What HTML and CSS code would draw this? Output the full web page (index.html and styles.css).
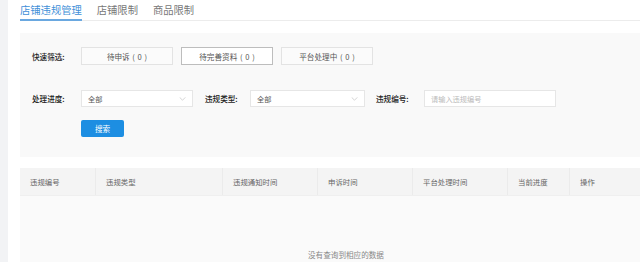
FILE: index.html
```html
<!DOCTYPE html>
<html lang="zh">
<head>
<meta charset="utf-8">
<link rel="stylesheet" href="styles.css">
</head>
<body>
<div class="page">
  <div class="tabs">
    <span class="tab active">店铺违规管理</span>
    <span class="tab">店铺限制</span>
    <span class="tab">商品限制</span>
  </div>
  <div class="panel">
    <div class="row">
      <span class="label">快速筛选:</span>
      <span class="qbtn">待申诉 ( 0 )</span>
      <span class="qbtn selected">待完善资料 ( 0 )</span>
      <span class="qbtn">平台处理中 ( 0 )</span>
    </div>
    <div class="row row2">
      <span class="label">处理进度:</span>
      <span class="select w1">全部<svg class="arrow" viewBox="0 0 8 5"><path d="M0.5 0.5 L4 4 L7.5 0.5" fill="none" stroke="#bbb" stroke-width="0.8"/></svg></span>
      <span class="label l2">违规类型:</span>
      <span class="select w2">全部<svg class="arrow" viewBox="0 0 8 5"><path d="M0.5 0.5 L4 4 L7.5 0.5" fill="none" stroke="#bbb" stroke-width="0.8"/></svg></span>
      <span class="label l3">违规编号:</span>
      <span class="input">请输入违规编号</span>
    </div>
    <div class="row row3">
      <span class="search">搜索</span>
    </div>
  </div>
  <div class="table">
    <div class="thead">
      <span class="th c1">违规编号</span>
      <span class="th c2">违规类型</span>
      <span class="th c3">违规通知时间</span>
      <span class="th c4">申诉时间</span>
      <span class="th c5">平台处理时间</span>
      <span class="th c6">当前进度</span>
      <span class="th c7">操作</span>
    </div>
    <div class="tbody">
      <span class="empty">没有查询到相应的数据</span>
    </div>
  </div>
</div>
</body>
</html>
```
FILE: styles.css
```css
html, body {
  margin: 0;
  padding: 0;
  width: 640px;
  height: 262px;
  overflow: hidden;
  background: #f2f3f5;
  font-family: "Noto Sans CJK SC", "Noto Sans", sans-serif;
}
.page {
  margin-left: 8px;
  background: #fff;
  height: 262px;
  width: 632px;
  overflow: hidden;
  padding-left: 12px;
  box-sizing: border-box;
}
.tabs {
  height: 21px;
  border-bottom: 1px solid #ececec;
  display: flex;
  gap: 15px;
  box-sizing: border-box;
  width: 652px;
}
.tab {
  font-size: 10.3px;
  line-height: 19px;
  color: #777;
  height: 21px;
  box-sizing: border-box;
}
.tab.active {
  color: #3f8fd8;
  border-bottom: 2px solid #6aa8e0;
}
.panel {
  margin-top: 12px;
  background: #f9f9f9;
  padding: 14px 0 20px 12px;
  width: 652px;
  box-sizing: border-box;
}
.row {
  display: flex;
  align-items: center;
  height: 18px;
}
.row2 { margin-top: 25px; height: 17px; }
.row3 { margin-top: 13px; padding-left: 49px; height: 17px; }
.label {
  font-size: 7.6px;
  font-weight: 500;
  color: #222;
  width: 49px;
  flex: none;
}
.label.l2 { width: 45px; margin-left: 12px; }
.label.l3 { width: 48px; margin-left: 11px; }
.qbtn {
  width: 92px;
  height: 18px;
  box-sizing: border-box;
  border: 1px solid #e3e3e3;
  background: #fbfbfb;
  font-size: 7.6px;
  color: #555;
  display: flex;
  align-items: center;
  justify-content: center;
  margin-right: 8px;
  word-spacing: 1px;
}
.qbtn.selected {
  border-color: #bdbdbd;
  background: #fff;
}
.select, .input {
  height: 17px;
  box-sizing: border-box;
  border: 1px solid #e6e6e6;
  background: #fff;
  font-size: 7.2px;
  color: #555;
  display: flex;
  align-items: center;
  padding-left: 6px;
  position: relative;
}
.w1 { width: 112px; }
.w2 { width: 115px; }
.input { width: 132px; color: #bbb; }
.arrow {
  position: absolute;
  right: 6px;
  top: 6px;
  width: 7px;
  height: 4px;
}
.search {
  width: 43px;
  height: 17px;
  background: #1d8ee2;
  border-radius: 2px;
  color: #fff;
  font-size: 7.6px;
  display: flex;
  align-items: center;
  justify-content: center;
}
.table {
  margin-top: 11px;
  width: 652px;
}
.thead {
  display: flex;
  height: 27px;
  background: #f4f4f4;
  border-bottom: 1px solid #efefef;
}
.th {
  font-size: 7.4px;
  color: #666;
  display: flex;
  align-items: center;
  padding-left: 10px;
  box-sizing: border-box;
  border-right: 1px solid #ebebeb;
}
.c1 { width: 76px; }
.c2 { width: 127px; }
.c3 { width: 95px; }
.c4 { width: 95px; }
.c5 { width: 95px; }
.c6 { width: 62px; }
.c7 { flex: 1; border-right: none; }
.tbody {
  background: #fafafa;
  height: 66px;
  display: flex;
  justify-content: center;
  padding-top: 54px;
  box-sizing: border-box;
}
.empty {
  font-size: 7.6px;
  line-height: 10px;
  color: #888;
}
```
